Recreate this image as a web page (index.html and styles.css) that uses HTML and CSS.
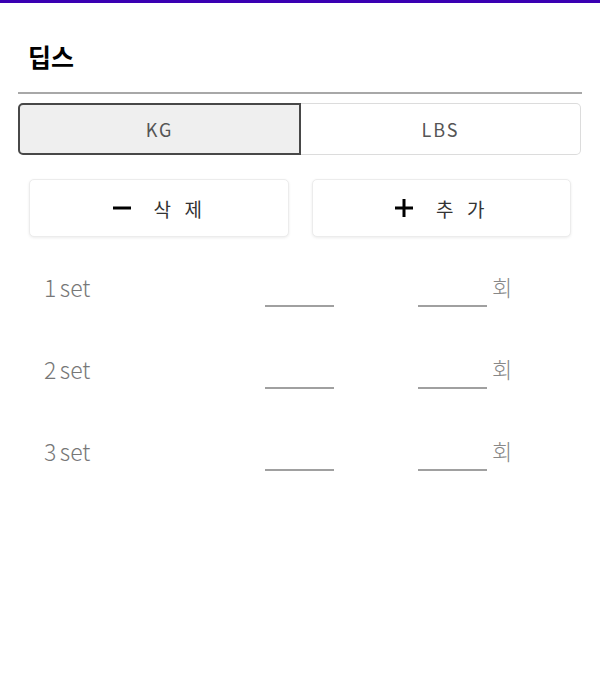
FILE: index.html
```html
<!DOCTYPE html>
<html lang="ko">
<head>
<meta charset="utf-8">
<link rel="stylesheet" href="styles.css">
</head>
<body>
<div class="topbar"></div>
<header class="header">
  <h1 class="title">딥스</h1>
  <div class="divider"></div>
</header>
<div class="toggle">
  <div class="toggle-item active">KG</div>
  <div class="toggle-item">LBS</div>
</div>
<div class="actions">
  <button class="action">
    <svg class="icon" viewBox="0 0 20 20" width="20" height="20"><path d="M1 10H19" stroke="#000" stroke-width="3"/></svg>
    <span class="action-text">삭 제</span>
  </button>
  <button class="action">
    <svg class="icon" viewBox="0 0 20 20" width="20" height="20"><path d="M1 10H19M10 1V19" stroke="#000" stroke-width="3"/></svg>
    <span class="action-text">추 가</span>
  </button>
</div>
<div class="sets">
  <div class="set-row">
    <span class="set-label">1 set</span>
    <span class="field"></span>
    <span class="field field-2"></span>
    <span class="unit">회</span>
  </div>
  <div class="set-row">
    <span class="set-label">2 set</span>
    <span class="field"></span>
    <span class="field field-2"></span>
    <span class="unit">회</span>
  </div>
  <div class="set-row">
    <span class="set-label">3 set</span>
    <span class="field"></span>
    <span class="field field-2"></span>
    <span class="unit">회</span>
  </div>
</div>
</body>
</html>
```
FILE: styles.css
```css
* { box-sizing: border-box; }
html, body {
  margin: 0;
  padding: 0;
  background: #fff;
  font-family: "Noto Sans CJK KR", "Noto Sans", sans-serif;
}
.topbar {
  height: 3px;
  background: #3a00b2;
}
.header {
  padding: 35px 18px 0 18px;
}
.title {
  margin: 0 0 0 10px;
  font-size: 25px;
  line-height: 36px;
  font-weight: 700;
  color: #000;
}
.divider {
  margin-top: 18px;
  height: 2px;
  background: #a8a8a8;
}
.toggle {
  display: flex;
  margin: 9px 19px 0 18px;
  height: 52px;
}
.toggle-item {
  flex: 1;
  display: flex;
  align-items: center;
  justify-content: center;
  font-size: 18px;
  letter-spacing: 2px;
  color: #555;
  border: 1px solid #dcdcdc;
  border-left: none;
  border-radius: 0 5px 5px 0;
  background: #fff;
}
.toggle-item.active {
  background: #efefef;
  border: 2px solid #484848;
  border-radius: 5px 0 0 5px;
}
.actions {
  display: flex;
  gap: 23px;
  margin: 24px 29px 0 29px;
}
.action {
  flex: 1;
  height: 58px;
  display: flex;
  align-items: center;
  justify-content: center;
  gap: 22px;
  background: #fff;
  border: 1px solid #ececec;
  border-radius: 5px;
  box-shadow: 0 1px 3px rgba(0,0,0,0.08);
  font-family: inherit;
  padding: 0;
}
.icon { display: block; }
.action-text {
  font-size: 19px;
  letter-spacing: 4px;
  color: #333;
}
.sets {
  margin-top: 28px;
}
.set-row {
  display: flex;
  align-items: flex-start;
  height: 82px;
  padding-left: 44px;
}
.set-label {
  width: 221px;
  margin-top: 7px;
  font-size: 23px;
  line-height: 30px;
  font-weight: 300;
  color: #777;
  word-spacing: -3px;
}
.field {
  width: 69px;
  height: 42px;
  border-bottom: 2px solid #a0a0a0;
}
.field-2 { margin-left: 84px; }
.unit {
  margin-left: 5px;
  margin-top: 8px;
  font-size: 22px;
  line-height: 26px;
  font-weight: 300;
  color: #888;
}
```
